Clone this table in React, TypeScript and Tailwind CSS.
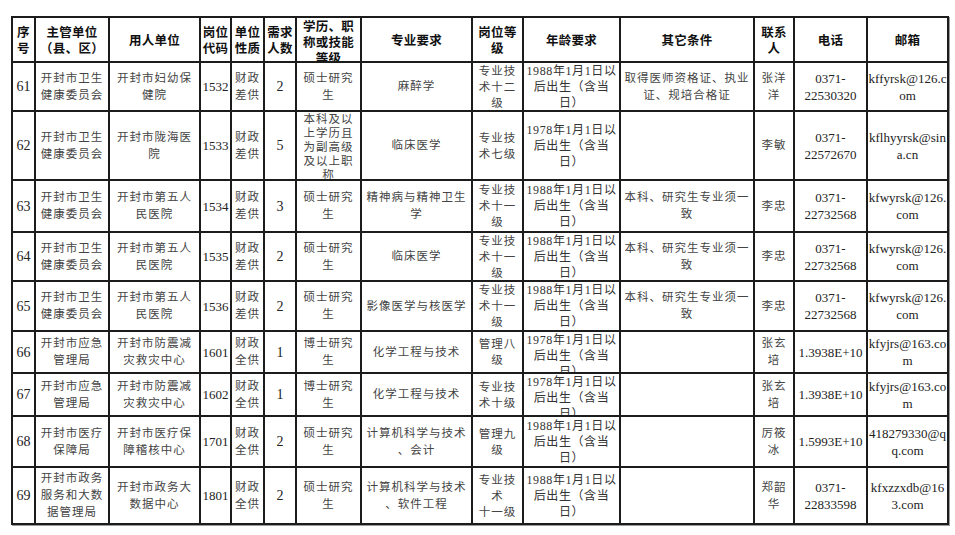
const head = [
  "序|号",
  "主管单位|（县、区）",
  "用人单位",
  "岗位|代码",
  "单位|性质",
  "需求|人数",
  "学历、职|称或技能|等级",
  "专业要求",
  "岗位等|级",
  "年龄要求",
  "其它条件",
  "联系|人",
  "电话",
  "邮箱",
];

const d88 = "1988年1月1日以|后出生（含当|日）";
const d78 = "1978年1月1日以|后出生（含当|日）";
const wsh = "开封市卫生|健康委员会";
const wy = "开封市第五人|民医院";
const same = "本科、研究生专业须一|致";

const rows: string[][] = [
  ["61", wsh, "开封市妇幼保|健院", "1532", "财政|差供", "2", "硕士研究|生", "麻醉学", "专业技|术十二|级", d88, "取得医师资格证、执业|证、规培合格证", "张洋|洋", "0371-|22530320", "kffyrsk@126.c|om"],
  ["62", wsh, "开封市陇海医|院", "1533", "财政|差供", "5", "本科及以|上学历且|为副高级|及以上职|称", "临床医学", "专业技|术七级", d78, "", "李敏", "0371-|22572670", "kflhyyrsk@sin|a.cn"],
  ["63", wsh, wy, "1534", "财政|差供", "3", "硕士研究|生", "精神病与精神卫生|学", "专业技|术十一|级", d88, same, "李忠", "0371-|22732568", "kfwyrsk@126.|com"],
  ["64", wsh, wy, "1535", "财政|差供", "2", "硕士研究|生", "临床医学", "专业技|术十一|级", d88, same, "李忠", "0371-|22732568", "kfwyrsk@126.|com"],
  ["65", wsh, wy, "1536", "财政|差供", "2", "硕士研究|生", "影像医学与核医学", "专业技|术十一|级", d88, same, "李忠", "0371-|22732568", "kfwyrsk@126.|com"],
  ["66", "开封市应急|管理局", "开封市防震减|灾救灾中心", "1601", "财政|全供", "1", "博士研究|生", "化学工程与技术", "管理八|级", d78, "", "张玄|培", "1.3938E+10", "kfyjrs@163.co|m"],
  ["67", "开封市应急|管理局", "开封市防震减|灾救灾中心", "1602", "财政|全供", "1", "博士研究|生", "化学工程与技术", "专业技|术十级", d78, "", "张玄|培", "1.3938E+10", "kfyjrs@163.co|m"],
  ["68", "开封市医疗|保障局", "开封市医疗保|障稽核中心", "1701", "财政|全供", "2", "硕士研究|生", "计算机科学与技术|、会计", "管理九|级", d88, "", "厉筱|冰", "1.5993E+10", "418279330@q|q.com"],
  ["69", "开封市政务|服务和大数|据管理局", "开封市政务大|数据中心", "1801", "财政|全供", "2", "硕士研究|生", "计算机科学与技术|、软件工程", "专业技|术|十一级", d88, "", "郑韶|华", "0371-|22833598", "kfxzzxdb@16|3.com"],
];

function cellText(col: number, row: number) {
  if (col === 0) return "text-[14px] leading-[17px] text-[#222]";
  if (col === 3) return "text-[13px] leading-[17px] text-[#222]";
  if (col === 5) return "text-[14px] leading-[17px] text-[#222]";
  if (col === 12 || col === 13) return "text-[13px] leading-[17px] text-[#222]";
  if (col === 9) return "text-[12px] leading-[16px] tracking-[0.6px] text-[#333]";
  if (col === 8) return "text-[11.5px] leading-[16px] tracking-[1px] text-[#444]";
  if (col === 6 && row === 1) return "text-[11.5px] leading-[14px] tracking-[1px] text-[#444]";
  return "text-[11.5px] leading-[17px] tracking-[1px] text-[#444]";
}

function Cell({ text, cls }: { text: string; cls: string }) {
  return (
    <div className="bg-white overflow-hidden flex flex-col [justify-content:safe_center] items-center text-center">
      {text.split("|").map((line, i) => (
        <div key={i} className={`whitespace-nowrap ${cls}`}>
          {line}
        </div>
      ))}
    </div>
  );
}

export default function App() {
  return (
    <div className="w-[955px] h-[535px] bg-white pt-[16px] pl-[11px]">
      <div
        className="grid grid-cols-[21px_72px_89px_29px_31px_30px_63px_109px_49px_95px_132px_38px_71px_79px] grid-rows-[43px_47px_67px_50px_47px_48px_40px_41px_49px_55px] gap-[2px] p-[2px] bg-[#1c1c1c] w-fit shadow-[1px_1px_0_#9a9a9a]"
        style={{ fontFamily: '"Liberation Serif", "Noto Sans CJK SC", serif' }}
      >
        {head.map((h, i) => (
          <Cell
            key={"h" + i}
            text={h}
            cls="text-[12.5px] leading-[16px] tracking-[0.3px] font-bold text-[#111] [font-family:'Noto_Sans_CJK_SC',sans-serif]"
          />
        ))}
        {rows.map((r, ri) =>
          r.map((c, ci) => <Cell key={ri + "-" + ci} text={c} cls={cellText(ci, ri)} />)
        )}
      </div>
    </div>
  );
}
